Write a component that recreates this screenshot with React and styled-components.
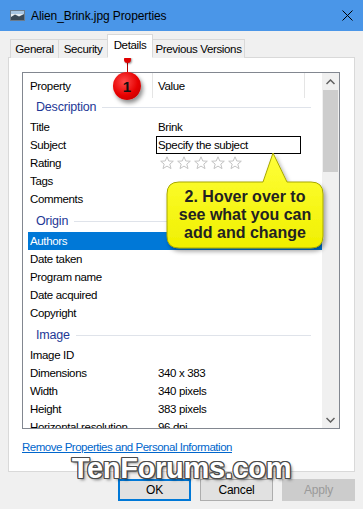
import styled, { createGlobalStyle } from "styled-components";

const GlobalStyle = createGlobalStyle`
  html, body {
    margin: 0;
    padding: 0;
    background: #f0f0f0;
  }
  body {
    font-family: "Liberation Sans", Arial, sans-serif;
    font-size: 11.5px;
    letter-spacing: -0.35px;
    color: #000;
  }
`;

const Window = styled.div`
  position: relative;
  width: 363px;
  height: 509px;
  background: #f0f0f0;
  overflow: hidden;
`;

const TitleBar = styled.div`
  height: 31px;
  background: #4a96e8;
  display: flex;
  align-items: center;
  padding-left: 10px;
  padding-right: 10px;
`;

const TitleText = styled.span`
  margin-left: 6px;
  flex: 1;
  font-size: 12px;
  letter-spacing: -0.1px;
  color: #000;
`;

const TabStrip = styled.div`
  display: flex;
  align-items: flex-end;
  height: 23px;
  padding-top: 4px;
  margin-left: 10px;
  margin-bottom: -1px;
  position: relative;
  z-index: 2;
`;

const Tab = styled.div`
  width: ${(p) => p.w}px;
  height: ${(p) => (p.active ? "24px" : "19px")};
  box-sizing: border-box;
  display: flex;
  align-items: center;
  justify-content: center;
  background: ${(p) => (p.active ? "#fff" : "#f0f0f0")};
  border: 1px solid #d9d9d9;
  border-bottom: ${(p) => (p.active ? "1px solid #fff" : "none")};
  border-right: ${(p) => (p.last || p.active ? "1px solid #d9d9d9" : "none")};
  border-left: ${(p) => (p.afterActive ? "none" : "1px solid #d9d9d9")};
  padding-bottom: ${(p) => (p.active ? "3px" : "0")};
  white-space: nowrap;
`;

const Panel = styled.div`
  margin-left: 8px;
  width: 347px;
  height: 415px;
  box-sizing: border-box;
  background: #fff;
  border: 1px solid #d9d9d9;
  padding-top: 14px;
  padding-left: 13px;
`;

const ListView = styled.div`
  width: 318px;
  height: 357px;
  box-sizing: border-box;
  border: 1px solid #828790;
  display: flex;
  overflow: hidden;
`;

const ListContent = styled.div`
  width: 299px;
  overflow: hidden;
`;

const HeaderRow = styled.div`
  height: 25px;
  display: flex;
  align-items: center;
`;

const HeaderCell = styled.div`
  height: 100%;
  width: ${(p) => p.w}px;
  box-sizing: border-box;
  padding-left: ${(p) => p.pad}px;
  display: flex;
  align-items: center;
  border-right: 1px solid #e5e5e5;
`;

const GroupHeader = styled.div`
  height: 20px;
  margin-top: ${(p) => (p.first ? 0 : 4)}px;
  display: flex;
  align-items: flex-start;
  padding-left: 13px;
  padding-right: 11px;
  line-height: 18px;
  font-size: 12.5px;
  letter-spacing: -0.2px;
  color: #1e3896;

  &::after {
    content: "";
    flex: 1;
    height: 1px;
    background: #dfe3ea;
    margin-top: 9px;
    margin-left: 6px;
  }
`;

const Row = styled.div`
  height: 18px;
  margin-left: 5px;
  padding-left: 2px;
  display: flex;
  align-items: center;
  background: ${(p) => (p.selected ? "#0078d7" : "transparent")};
  color: ${(p) => (p.selected ? "#fff" : "#000")};
`;

const Label = styled.div`
  width: 128px;
  white-space: nowrap;
`;

const Value = styled.div`
  white-space: nowrap;
`;

const EditBox = styled.div`
  margin-left: -2px;
  width: 145px;
  height: 18px;
  box-sizing: border-box;
  border: 1px solid #000;
  padding-left: 1px;
  display: flex;
  align-items: center;
`;

const Stars = styled.div`
  display: flex;
  gap: 3px;
  margin-left: 2px;
`;

const ScrollBar = styled.div`
  width: 17px;
  background: #f0f0f0;
  display: flex;
  flex-direction: column;
`;

const ScrollArrow = styled.div`
  height: 17px;
  display: flex;
  align-items: center;
  justify-content: center;
`;

const ScrollThumb = styled.div`
  height: 82px;
  margin: 0 1px;
  background: #cdcdcd;
`;

const ScrollTrack = styled.div`
  flex: 1;
`;

const Link = styled.a`
  display: block;
  margin-top: 11px;
  color: #0066cc;
  text-decoration: underline;
  letter-spacing: -0.48px;
  line-height: 14px;
  cursor: pointer;
`;

const ButtonRow = styled.div`
  display: flex;
  justify-content: flex-end;
  gap: 9px;
  margin-top: 7px;
  padding-right: 8px;
`;

const Button = styled.div`
  width: 73px;
  height: 22px;
  box-sizing: border-box;
  display: flex;
  align-items: center;
  justify-content: center;
  font-size: 12px;
  letter-spacing: -0.2px;
  border: ${(p) => (p.primary ? "2px" : "1px")} solid;
  border-color: ${(p) => (p.disabled ? "#cccccc" : p.primary ? "#0078d7" : "#adadad")};
  background: ${(p) => (p.disabled ? "#cccccc" : "#e1e1e1")};
  color: ${(p) => (p.disabled ? "#9a9a9a" : "#000")};
`;

const Watermark = styled.div`
  position: absolute;
  left: 0;
  right: 0;
  top: 452px;
  text-align: center;
  font-family: "Liberation Sans", Arial, sans-serif;
  font-weight: bold;
  font-size: 29px;
  color: #fff;
  letter-spacing: -0.3px;
  text-shadow: 1px 1px 0 #4a4a4a, -1px -1px 0 #4a4a4a, 1px -1px 0 #4a4a4a,
    -1px 1px 0 #4a4a4a, 0 1px 0 #4a4a4a, 1px 0 0 #4a4a4a, 0 -1px 0 #4a4a4a,
    -1px 0 0 #4a4a4a, 2px 2px 3px rgba(0, 0, 0, 0.5);
  pointer-events: none;
`;

const Badge = styled.div`
  position: absolute;
  left: 113px;
  top: 72px;
  width: 28px;
  height: 28px;
  border-radius: 50%;
  background: radial-gradient(circle at 40% 35%, #ff4a4a 0%, #e60000 55%, #b00000 100%);
  box-shadow: 2px 3px 4px rgba(0, 0, 0, 0.45);
  display: flex;
  align-items: center;
  justify-content: center;
  font-family: "Liberation Sans", Arial, sans-serif;
  font-weight: bold;
  font-size: 15px;
  letter-spacing: 0;
  color: #111;
`;

const PinDot = styled.div`
  position: absolute;
  left: 124px;
  top: 56px;
  width: 7px;
  height: 7px;
  border-radius: 50%;
  background: #e00000;
  box-shadow: 1px 1px 2px rgba(0, 0, 0, 0.4);
`;

const PinLine = styled.div`
  position: absolute;
  left: 127px;
  top: 62px;
  width: 1px;
  height: 11px;
  background: #b00000;
`;

const Callout = styled.div`
  position: absolute;
  left: 163px;
  top: 150px;
  width: 168px;
  height: 106px;
`;

const CalloutText = styled.div`
  position: absolute;
  left: 4px;
  top: 38px;
  width: 156px;
  text-align: center;
  font-family: "Liberation Sans", Arial, sans-serif;
  font-weight: bold;
  font-size: 16px;
  letter-spacing: 0;
  line-height: 18px;
  color: #222;
`;

const Star = () => (
  <svg width="14" height="14" viewBox="0 0 14 14">
    <polygon
      points="7,0.8 8.8,5 13.3,5.2 9.8,8.1 11,12.6 7,10.1 3,12.6 4.2,8.1 0.7,5.2 5.2,5"
      fill="#fff"
      stroke="#c4c4c4"
      strokeWidth="1"
      strokeLinejoin="round"
    />
  </svg>
);

const groups = [
  {
    name: "Description",
    rows: [
      ["Title", "Brink"],
      ["Subject", "edit"],
      ["Rating", "stars"],
      ["Tags", ""],
      ["Comments", ""],
    ],
  },
  {
    name: "Origin",
    rows: [
      ["Authors", "", true],
      ["Date taken", ""],
      ["Program name", ""],
      ["Date acquired", ""],
      ["Copyright", ""],
    ],
  },
  {
    name: "Image",
    rows: [
      ["Image ID", ""],
      ["Dimensions", "340 x 383"],
      ["Width", "340 pixels"],
      ["Height", "383 pixels"],
      ["Horizontal resolution", "96 dpi"],
      ["Vertical resolution", "96 dpi"],
    ],
  },
];

const renderValue = (v) => {
  if (v === "edit") return <EditBox>Specify the subject</EditBox>;
  if (v === "stars")
    return (
      <Stars>
        {[0, 1, 2, 3, 4].map((i) => (
          <Star key={i} />
        ))}
      </Stars>
    );
  return <Value>{v}</Value>;
};

const App = () => {
  return (
    <Window>
      <GlobalStyle />
      <TitleBar>
        <svg width="15" height="11" viewBox="0 0 15 11">
          <rect x="0.5" y="0.5" width="14" height="10" fill="#e8eef4" stroke="#6b7b8c" />
          <rect x="1" y="1" width="13" height="3" fill="#a9c6e3" />
          <path d="M1 7 L5 4.5 L9 6.5 L14 4 L14 10 L1 10 Z" fill="#3a4a5a" />
        </svg>
        <TitleText>Alien_Brink.jpg Properties</TitleText>
        <svg width="11" height="11" viewBox="0 0 11 11">
          <path d="M0.5 0.5 L10.5 10.5 M10.5 0.5 L0.5 10.5" stroke="#000" strokeWidth="1" />
        </svg>
      </TitleBar>

      <TabStrip>
        <Tab w={48}>General</Tab>
        <Tab w={49}>Security</Tab>
        <Tab w={46} active>
          Details
        </Tab>
        <Tab w={92} last afterActive>
          Previous Versions
        </Tab>
      </TabStrip>

      <Panel>
        <ListView>
          <ListContent>
            <HeaderRow>
              <HeaderCell w={130} pad={7}>
                Property
              </HeaderCell>
              <HeaderCell w={152} pad={5}>
                Value
              </HeaderCell>
            </HeaderRow>
            {groups.map((g, gi) => (
              <div key={g.name}>
                <GroupHeader first={gi === 0}>{g.name}</GroupHeader>
                {g.rows.map(([label, value, selected]) => (
                  <Row key={label} selected={selected}>
                    <Label>{label}</Label>
                    {renderValue(value)}
                  </Row>
                ))}
              </div>
            ))}
          </ListContent>
          <ScrollBar>
            <ScrollArrow>
              <svg width="9" height="6" viewBox="0 0 9 6">
                <path d="M0.5 5 L4.5 1 L8.5 5" fill="none" stroke="#606060" strokeWidth="1.5" />
              </svg>
            </ScrollArrow>
            <ScrollThumb />
            <ScrollTrack />
            <ScrollArrow>
              <svg width="9" height="6" viewBox="0 0 9 6">
                <path d="M0.5 1 L4.5 5 L8.5 1" fill="none" stroke="#606060" strokeWidth="1.5" />
              </svg>
            </ScrollArrow>
          </ScrollBar>
        </ListView>
        <Link>Remove Properties and Personal Information</Link>
      </Panel>

      <ButtonRow>
        <Button primary>OK</Button>
        <Button>Cancel</Button>
        <Button disabled>Apply</Button>
      </ButtonRow>

      <Watermark>TenForums.com</Watermark>

      <PinLine />
      <PinDot />
      <Badge>1</Badge>

      <Callout>
        <svg width="168" height="106" viewBox="0 0 168 106">
          <defs>
            <linearGradient id="cg" x1="0" y1="0" x2="0" y2="1">
              <stop offset="0" stopColor="#ffff3a" />
              <stop offset="1" stopColor="#f0f000" />
            </linearGradient>
            <filter id="cs" x="-10%" y="-10%" width="130%" height="130%">
              <feDropShadow dx="2" dy="3" stdDeviation="2" floodColor="#000" floodOpacity="0.35" />
            </filter>
          </defs>
          <path
            d="M16 32 H100 L110 3 L124 32 H148 Q160 32 160 44 V86 Q160 98 148 98 H16 Q4 98 4 86 V44 Q4 32 16 32 Z"
            fill="url(#cg)"
            stroke="#a8a800"
            strokeWidth="1"
            filter="url(#cs)"
          />
        </svg>
        <CalloutText>
          2. Hover over to
          <br />
          see what you can
          <br />
          add and change
        </CalloutText>
      </Callout>
    </Window>
  );
};

export default App;
